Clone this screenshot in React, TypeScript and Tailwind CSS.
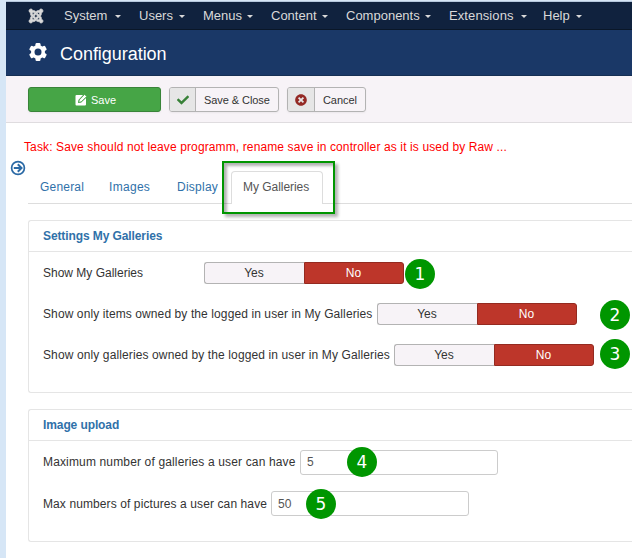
import type { ReactNode } from "react";
import { FaCheck, FaTimesCircle, FaJoomla } from "react-icons/fa";

function MenuItem({ label, className }: { label: string; className: string }) {
  return (
    <div className={`flex items-center shrink-0 ${className}`}>
      <span>{label}</span>
      <svg className="ml-auto mt-[2px]" width="6" height="3" viewBox="0 0 6 3"><path d="M0 0h6L3 3z" fill="#d9d9d9" /></svg>
    </div>
  );
}

function GearIcon() {
  return (
    <svg className="mt-[-1px] mr-[14px] shrink-0" width="18" height="18" viewBox="-9 -9 18 18" fill="#fff">
      <g>
        <rect x="-2.5" y="-9" width="5" height="18" rx="1.2" />
        <rect x="-2.5" y="-9" width="5" height="18" rx="1.2" transform="rotate(60)" />
        <rect x="-2.5" y="-9" width="5" height="18" rx="1.2" transform="rotate(120)" />
        <circle r="7" />
      </g>
      <circle r="3.5" fill="#1a3867" />
    </svg>
  );
}

function SaveIcon() {
  return (
    <svg width="12" height="12" viewBox="0 0 12 12">
      <path d="M1.5 1H8L3.6 5.7 3 9l3.3-.6L11 4v6.5a1 1 0 0 1-1 1H1.5a1 1 0 0 1-1-1V2a1 1 0 0 1 1-1z" fill="#fff" />
      <path d="M9.6.4 11.7 2.5 6.2 7.8 3.8 8.3l.5-2.4z" fill="#fff" stroke="#46a546" strokeWidth=".7" />
    </svg>
  );
}

function Badge({ n, className }: { n: number; className: string }) {
  return (
    <span className={`absolute flex size-[30px] items-center justify-center rounded-full bg-[#009600] font-['DejaVu_Sans',sans-serif] text-[17px] leading-none text-white ${className}`}>{n}</span>
  );
}

function YesNo() {
  return (
    <div className="flex h-[22px] w-[200px] shrink-0 text-center text-[12px] leading-[20px]">
      <div className="w-[100px] rounded-l-[3px] border border-r-0 border-[#b3b3b3] bg-[#f7f3f7] pr-px">Yes</div>
      <div className="w-[100px] rounded-r-[3px] border border-[#942a20] bg-[#bd362a] pr-px text-white">No</div>
    </div>
  );
}

function Panel({ title, className, children }: { title: ReactNode; className: string; children: ReactNode }) {
  return (
    <section className={`ml-[22px] rounded-l-[3px] border border-r-0 border-[#e5e5e5] ${className}`}>
      <h2 className="h-[31px] border-b border-[#e5e5e5] pl-[14px] text-[12px] leading-[30px] font-bold tracking-[-0.1px] text-[#3071a9]">{title}</h2>
      {children}
    </section>
  );
}

export default function App() {
  return (
    <div className="h-[558px] w-[632px] overflow-hidden bg-[#d6e6f6] pt-px pl-[6px] font-['Liberation_Sans',Arial,sans-serif] text-[12px] text-[#333]">
      <div className="h-[557px] border-t border-[#b5c7dc] bg-white">
        <nav className="flex h-[28px] items-center border-b border-[#0a1728] bg-[#10223e] pl-[22px] text-[13px] text-[#d9d9d9]">
          <FaJoomla className="mr-[20px] size-[16px] shrink-0" stroke="currentColor" strokeWidth="22" />
          <MenuItem label="System" className="mr-[18px] w-[57px]" />
          <MenuItem label="Users" className="mr-[18px] w-[46px]" />
          <MenuItem label="Menus" className="mr-[18px] w-[50px]" />
          <MenuItem label="Content" className="mr-[18px] w-[57px]" />
          <MenuItem label="Components" className="mr-[18px] w-[85px]" />
          <MenuItem label="Extensions" className="mr-[16px] w-[78px] tracking-[0.1px]" />
          <MenuItem label="Help" className="w-[39px]" />
        </nav>

        <header className="flex h-[46px] items-center border-b border-[#152f53] bg-[#1a3867] pl-[23px] text-white">
          <GearIcon />
          <h1 className="ml-[-1px] pt-[2px] text-[18px] leading-none tracking-[-0.04px]">Configuration</h1>
        </header>

        <div className="flex h-[47px] items-start border-b border-[#dfdcdf] bg-[#f7f3f7] pt-[11px] pl-[22px] text-[11px]">
          <button className="mr-[8px] flex h-[25px] w-[133px] items-center justify-center gap-[4px] rounded-[3px] border border-[#398439] bg-[#46a546] pt-px pl-[2px] text-white shadow-[0_1px_2px_rgba(0,0,0,0.05)]">
            <SaveIcon />
            <span>Save</span>
          </button>
          <button className="mr-[8px] flex h-[25px] w-[110px] rounded-[3px] border border-[#b3b3b3] leading-[24px] shadow-[0_1px_2px_rgba(0,0,0,0.05)]">
            <span className="flex h-full w-[26px] items-center justify-center rounded-l-[2px] border-r border-[#b3b3b3] bg-[#e6e6e6] text-[#378137]"><FaCheck className="size-[12px]" /></span>
            <span className="ml-[8px] whitespace-nowrap tracking-[-0.07px]">Save &amp; Close</span>
          </button>
          <button className="flex h-[25px] w-[79px] rounded-[3px] border border-[#b3b3b3] leading-[24px] shadow-[0_1px_2px_rgba(0,0,0,0.05)]">
            <span className="flex h-full w-[27px] items-center justify-center rounded-l-[2px] border-r border-[#b3b3b3] bg-[#e6e6e6] text-[#942a25]"><FaTimesCircle className="size-[12px]" /></span>
            <span className="ml-[8px] tracking-[-0.07px]">Cancel</span>
          </button>
        </div>

        <p className="mt-[15px] ml-[18px] h-[18px] text-[12px] leading-[18px] tracking-[0.122px] whitespace-nowrap text-[#f00]">Task: Save should not leave programm, rename save in controller as it is used by Raw ...</p>

        <div className="relative flex h-[48px] items-end">
          <svg className="absolute top-[4px] left-[4px]" width="16" height="16" viewBox="0 0 16 16" fill="none" stroke="#2a69a5">
            <circle cx="8" cy="8" r="6.4" strokeWidth="1.7" />
            <path d="M3.8 8h7.2M7.8 4.3 11.5 8l-3.7 3.7" strokeWidth="2" />
          </svg>
          <div className="ml-[22px] flex h-[33px] flex-1 border-b border-[#ddd] text-[12px] leading-[32px] text-[#3071a9]">
            <span className="w-[69px] pl-[12px] tracking-[0.2px]">General</span>
            <span className="w-[68px] pl-[12px] tracking-[0.3px]">Images</span>
            <span className="w-[66px] pl-[12px] tracking-[0.25px]">Display</span>
            <span className="h-[33px] w-[92px] rounded-t-[4px] border border-b-0 border-[#ddd] bg-white pl-[11px] leading-[31px] tracking-[-0.04px] text-[#555]">My Galleries</span>
          </div>
          <div className="absolute top-[5px] left-[216px] h-[53px] w-[113px] border-2 border-[#009600] shadow-[3px_3px_3px_rgba(0,0,0,0.3),inset_3px_3px_3px_rgba(0,0,0,0.3)]" />
        </div>

        <Panel title="Settings My Galleries" className="mt-[16px] h-[173px]">
          <div className="relative mt-[10px] flex h-[22px] items-center pl-[14px]">
            <span className="w-[161px]">Show My Galleries</span>
            <YesNo />
            <Badge n={1} className="top-[-3px] left-[376px]" />
          </div>
          <div className="relative mt-[19px] flex h-[22px] items-center pl-[14px]">
            <span className="w-[334px] tracking-[0.1px] whitespace-nowrap">Show only items owned by the logged in user in My Galleries</span>
            <YesNo />
            <Badge n={2} className="top-[-3px] left-[571px]" />
          </div>
          <div className="relative mt-[19px] flex h-[22px] items-center pl-[14px]">
            <span className="w-[351px] tracking-[0.117px] whitespace-nowrap">Show only galleries owned by the logged in user in My Galleries</span>
            <YesNo />
            <Badge n={3} className="top-[-5px] left-[571px]" />
          </div>
        </Panel>

        <Panel title="Image upload" className="mt-[16px] h-[133px]">
          <div className="relative mt-[9px] flex h-[25px] items-center pl-[14px]">
            <span className="w-[257px] pb-px tracking-[0.15px] whitespace-nowrap">Maximum number of galleries a user can have</span>
            <div className="h-[25px] w-[198px] rounded-[3px] border border-[#ccc] pl-[6px] leading-[23px] text-[#555]">5</div>
            <Badge n={4} className="top-[-3px] left-[318px]" />
          </div>
          <div className="relative mt-[16px] flex h-[25px] items-center pl-[14px]">
            <span className="w-[228px] tracking-[0.1px] whitespace-nowrap">Max numbers of pictures a user can have</span>
            <div className="h-[25px] w-[198px] rounded-[3px] border border-[#ccc] pl-[6px] leading-[24px] text-[#555]">50</div>
            <Badge n={5} className="top-[-2px] left-[277px]" />
          </div>
        </Panel>
      </div>
    </div>
  );
}
